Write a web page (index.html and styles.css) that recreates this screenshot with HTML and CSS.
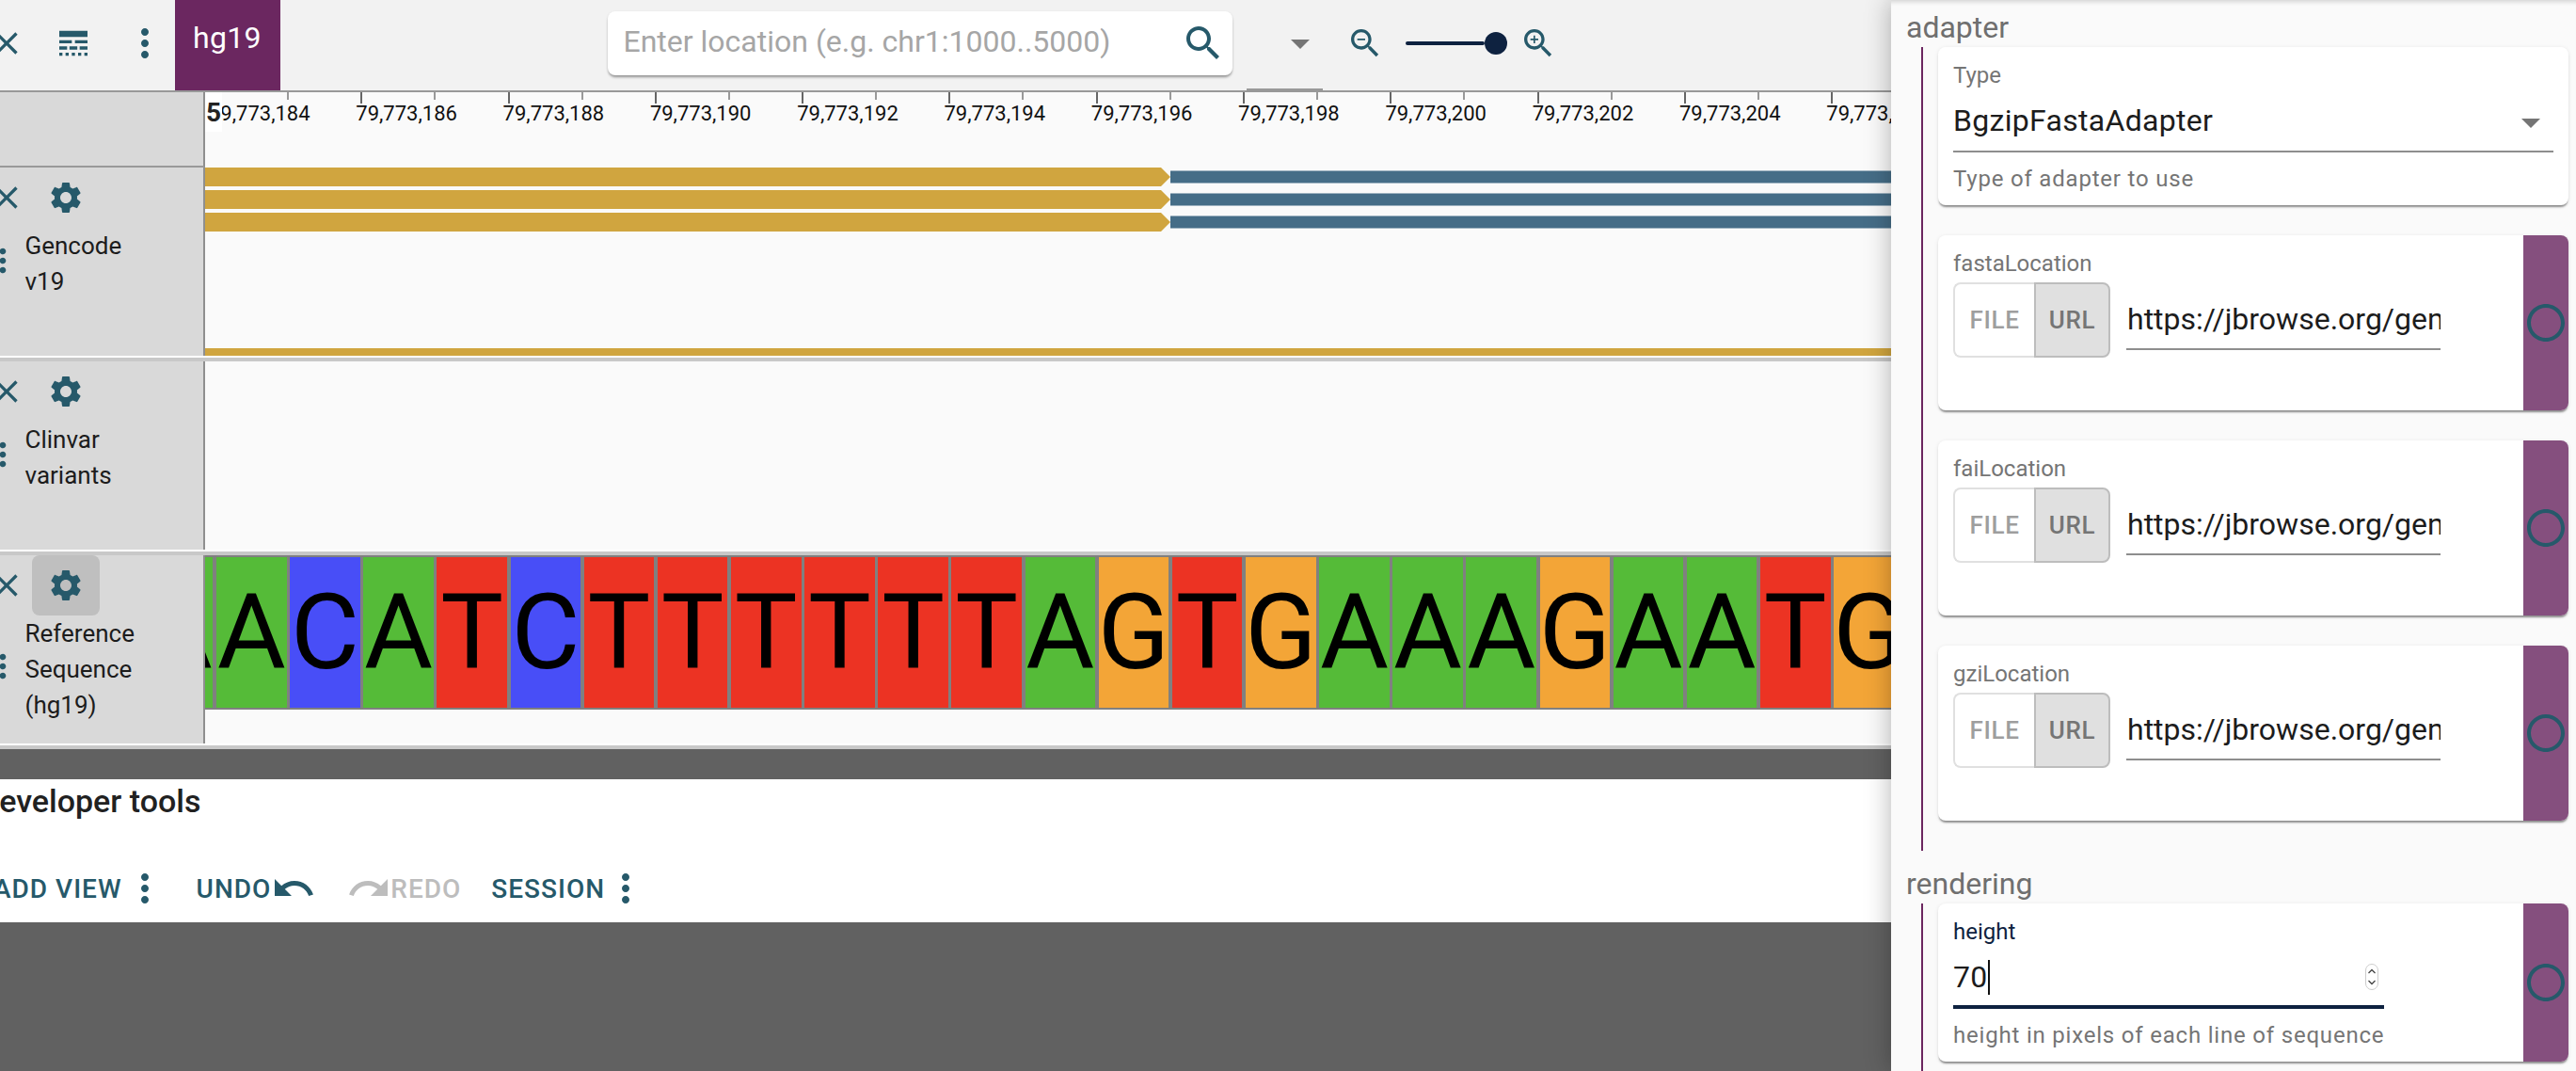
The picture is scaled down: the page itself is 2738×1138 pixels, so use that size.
FILE: index.html
```html
<!DOCTYPE html>
<html lang="en">
<head>
    <meta charset="UTF-8">
    <title>JBrowse - hg19</title>
    <link rel="stylesheet" href="styles.css">
</head>
<body>

<svg class="sprite" xmlns="http://www.w3.org/2000/svg">
    <symbol id="i-close" viewBox="0 0 24 24"><path d="M19 6.41L17.59 5 12 10.59 6.41 5 5 6.41 10.59 12 5 17.59 6.41 19 12 13.41 17.59 19 19 17.59 13.41 12z"/></symbol>
    <symbol id="i-linestyle" viewBox="0 0 24 24"><path d="M3 16h5v-2H3v2zm6.5 0h5v-2h-5v2zm6.5 0h5v-2h-5v2zM3 20h2v-2H3v2zm4 0h2v-2H7v2zm4 0h2v-2h-2v2zm4 0h2v-2h-2v2zm4 0h2v-2h-2v2zM3 12h8v-2H3v2zm10 0h8v-2h-8v2zM3 4v4h18V4H3z"/></symbol>
    <symbol id="i-more" viewBox="0 0 24 24"><path d="M12 8c1.1 0 2-.9 2-2s-.9-2-2-2-2 .9-2 2 .9 2 2 2zm0 2c-1.1 0-2 .9-2 2s.9 2 2 2 2-.9 2-2-.9-2-2-2zm0 6c-1.1 0-2 .9-2 2s.9 2 2 2 2-.9 2-2-.9-2-2-2z"/></symbol>
    <symbol id="i-search" viewBox="0 0 24 24"><path d="M15.5 14h-.79l-.28-.27C15.41 12.59 16 11.11 16 9.5 16 5.91 13.09 3 9.5 3S3 5.91 3 9.5 5.91 16 9.5 16c1.61 0 3.09-.59 4.23-1.57l.27.28v.79l5 4.99L20.49 19l-4.99-5zm-6 0C7.01 14 5 11.99 5 9.5S7.01 5 9.5 5 14 7.01 14 9.5 11.99 14 9.5 14z"/></symbol>
    <symbol id="i-zoomout" viewBox="0 0 24 24"><path d="M15.5 14h-.79l-.28-.27C15.41 12.59 16 11.11 16 9.5 16 5.91 13.09 3 9.5 3S3 5.91 3 9.5 5.91 16 9.5 16c1.61 0 3.09-.59 4.23-1.57l.27.28v.79l5 4.99L20.49 19l-4.99-5zm-6 0C7.01 14 5 11.99 5 9.5S7.01 5 9.5 5 14 7.01 14 9.5 11.99 14 9.5 14zM7 9h5v1H7z"/></symbol>
    <symbol id="i-zoomin" viewBox="0 0 24 24"><path d="M15.5 14h-.79l-.28-.27C15.41 12.59 16 11.11 16 9.5 16 5.91 13.09 3 9.5 3S3 5.91 3 9.5 5.91 16 9.5 16c1.61 0 3.09-.59 4.23-1.57l.27.28v.79l5 4.99L20.49 19l-4.99-5zm-6 0C7.01 14 5 11.99 5 9.5S7.01 5 9.5 5 14 7.01 14 9.5 11.99 14 9.5 14zM12 10h-2v2H9v-2H7V9h2V7h1v2h2v1z"/></symbol>
    <symbol id="i-drop" viewBox="0 0 24 24"><path d="M7 10l5 5 5-5z"/></symbol>
    <symbol id="i-gear" viewBox="0 0 24 24"><path d="M19.14 12.94c.04-.3.06-.61.06-.94 0-.32-.02-.64-.07-.94l2.03-1.58c.18-.14.23-.41.12-.61l-1.92-3.32c-.12-.22-.37-.29-.59-.22l-2.39.96c-.5-.38-1.03-.7-1.62-.94l-.36-2.54c-.04-.24-.24-.41-.48-.41h-3.84c-.24 0-.43.17-.47.41l-.36 2.54c-.59.24-1.13.57-1.62.94l-2.39-.96c-.22-.08-.47 0-.59.22L2.74 8.87c-.12.21-.08.47.12.61l2.03 1.58c-.05.3-.09.63-.09.94s.02.64.07.94l-2.03 1.58c-.18.14-.23.41-.12.61l1.92 3.32c.12.22.37.29.59.22l2.39-.96c.5.38 1.03.7 1.62.94l.36 2.54c.05.24.24.41.48.41h3.84c.24 0 .44-.17.47-.41l.36-2.54c.59-.24 1.13-.56 1.62-.94l2.39.96c.22.08.47 0 .59-.22l1.92-3.32c.12-.22.07-.47-.12-.61l-2.01-1.58zM12 15.6c-1.98 0-3.6-1.62-3.6-3.6s1.62-3.6 3.6-3.6 3.6 1.62 3.6 3.6-1.62 3.6-3.6 3.6z"/></symbol>
    <symbol id="i-undo" viewBox="0 0 24 24"><path d="M12.5 8c-2.65 0-5.05.99-6.9 2.6L2 7v9h9l-3.62-3.62c1.39-1.16 3.16-1.88 5.12-1.88 3.54 0 6.55 2.31 7.6 5.5l2.37-.78C21.08 11.03 17.15 8 12.5 8z"/></symbol>
    <symbol id="i-redo" viewBox="0 0 24 24"><path d="M18.4 10.6C16.55 8.99 14.15 8 11.5 8c-4.65 0-8.58 3.03-9.96 7.22L3.9 16c1.05-3.19 4.05-5.5 7.6-5.5 1.95 0 3.73.72 5.12 1.88L13 16h9V7l-3.6 3.6z"/></symbol>
    <symbol id="i-radio" viewBox="0 0 24 24"><path d="M12 2C6.48 2 2 6.48 2 12s4.48 10 10 10 10-4.48 10-10S17.52 2 12 2zm0 18c-4.42 0-8-3.58-8-8s3.58-8 8-8 8 3.58 8 8-3.58 8-8 8z"/></symbol>
</svg>

<div class="main">
    <div class="topbar">
        <svg class="icon icon-40 first-close"><use href="#i-close"/></svg>
        <svg class="icon icon-40 style-icon"><use href="#i-linestyle"/></svg>
        <svg class="icon icon-48 menu-icon"><use href="#i-more"/></svg>
        <div class="assembly-tab">hg19</div>
        <div class="search">
            <span class="search-text">Enter location (e.g. chr1:1000..5000)</span>
            <svg class="icon icon-48"><use href="#i-search"/></svg>
        </div>
        <div class="nav-select"><svg class="icon icon-48 grey"><use href="#i-drop"/></svg></div>
        <svg class="icon icon-40 zoom-out"><use href="#i-zoomout"/></svg>
        <div class="slider"><div class="slider-track"></div><div class="slider-thumb"></div></div>
        <svg class="icon icon-40 zoom-in"><use href="#i-zoomin"/></svg>
    </div>

    <div class="ruler-row">
        <div class="label-head"></div>
        <div class="ruler">
            <div class="ruler-cell">79,773,184</div>
            <div class="ruler-cell">79,773,186</div>
            <div class="ruler-cell">79,773,188</div>
            <div class="ruler-cell">79,773,190</div>
            <div class="ruler-cell">79,773,192</div>
            <div class="ruler-cell">79,773,194</div>
            <div class="ruler-cell">79,773,196</div>
            <div class="ruler-cell">79,773,198</div>
            <div class="ruler-cell">79,773,200</div>
            <div class="ruler-cell">79,773,202</div>
            <div class="ruler-cell">79,773,204</div>
            <div class="ruler-cell">79,773,206</div>
            <div class="chrom-badge">5</div>
        </div>
    </div>

    <div class="track">
        <div class="track-label">
            <div class="track-buttons">
                <svg class="icon icon-40"><use href="#i-close"/></svg>
                <div class="gear-btn"><svg class="icon icon-40"><use href="#i-gear"/></svg></div>
            </div>
            <div class="track-title-row">
                <svg class="icon icon-40 track-menu"><use href="#i-more"/></svg>
                <div class="track-title">Gencode<br>v19</div>
            </div>
        </div>
        <div class="track-canvas genes">
            <div class="gene-row"><div class="cds"></div><div class="utr"></div></div>
            <div class="gene-row"><div class="cds"></div><div class="utr"></div></div>
            <div class="gene-row"><div class="cds"></div><div class="utr"></div></div>
            <div class="gene-bottom"></div>
        </div>
    </div>

    <div class="track">
        <div class="track-label">
            <div class="track-buttons">
                <svg class="icon icon-40"><use href="#i-close"/></svg>
                <div class="gear-btn"><svg class="icon icon-40"><use href="#i-gear"/></svg></div>
            </div>
            <div class="track-title-row">
                <svg class="icon icon-40 track-menu"><use href="#i-more"/></svg>
                <div class="track-title">Clinvar<br>variants</div>
            </div>
        </div>
        <div class="track-canvas"></div>
    </div>

    <div class="track">
        <div class="track-label">
            <div class="track-buttons">
                <svg class="icon icon-40"><use href="#i-close"/></svg>
                <div class="gear-btn hovered"><svg class="icon icon-40"><use href="#i-gear"/></svg></div>
            </div>
            <div class="track-title-row">
                <svg class="icon icon-40 track-menu"><use href="#i-more"/></svg>
                <div class="track-title">Reference<br>Sequence<br>(hg19)</div>
            </div>
        </div>
        <div class="track-canvas">
            <div class="sequence">
                <div class="base a">A</div><div class="base a">A</div><div class="base c">C</div><div class="base a">A</div>
                <div class="base t">T</div><div class="base c">C</div><div class="base t">T</div><div class="base t">T</div>
                <div class="base t">T</div><div class="base t">T</div><div class="base t">T</div><div class="base t">T</div>
                <div class="base a">A</div><div class="base g">G</div><div class="base t">T</div><div class="base g">G</div>
                <div class="base a">A</div><div class="base a">A</div><div class="base a">A</div><div class="base g">G</div>
                <div class="base a">A</div><div class="base a">A</div><div class="base t">T</div><div class="base g">G</div>
                <div class="base a">A</div>
            </div>
        </div>
    </div>

    <div class="devtools">
        <div class="devtools-title">Developer tools</div>
        <div class="devtools-bar">
            <span class="dev-btn add-view">ADD VIEW</span>
            <svg class="icon icon-48"><use href="#i-more"/></svg>
            <span class="dev-btn undo">UNDO</span>
            <svg class="icon icon-48 undo-icon"><use href="#i-undo"/></svg>
            <svg class="icon icon-48 redo-icon"><use href="#i-redo"/></svg>
            <span class="dev-btn redo">REDO</span>
            <span class="dev-btn session">SESSION</span>
            <svg class="icon icon-48 session-menu"><use href="#i-more"/></svg>
        </div>
    </div>
</div>

<div class="drawer">
    <div class="section-title first">adapter</div>
    <div class="section-body">
        <div class="card card-short">
            <div class="card-body">
                <div class="field-label">Type</div>
                <div class="select-box">
                    <span class="value">BgzipFastaAdapter</span>
                    <svg class="icon icon-48 grey"><use href="#i-drop"/></svg>
                </div>
                <div class="helper">Type of adapter to use</div>
            </div>
        </div>

        <div class="card card-slot">
            <div class="card-body">
                <div class="field-label">fastaLocation</div>
                <div class="location-row">
                    <div class="toggle"><span class="toggle-file">FILE</span><span class="toggle-url">URL</span></div>
                    <div class="url-input"><span class="value">https://jbrowse.org/genomes/hg19/fasta/hg19.fa.gz</span></div>
                </div>
            </div>
            <div class="slot-side"><svg class="icon icon-48"><use href="#i-radio"/></svg></div>
        </div>

        <div class="card card-slot">
            <div class="card-body">
                <div class="field-label">faiLocation</div>
                <div class="location-row">
                    <div class="toggle"><span class="toggle-file">FILE</span><span class="toggle-url">URL</span></div>
                    <div class="url-input"><span class="value">https://jbrowse.org/genomes/hg19/fasta/hg19.fa.gz.fai</span></div>
                </div>
            </div>
            <div class="slot-side"><svg class="icon icon-48"><use href="#i-radio"/></svg></div>
        </div>

        <div class="card card-slot">
            <div class="card-body">
                <div class="field-label">gziLocation</div>
                <div class="location-row">
                    <div class="toggle"><span class="toggle-file">FILE</span><span class="toggle-url">URL</span></div>
                    <div class="url-input"><span class="value">https://jbrowse.org/genomes/hg19/fasta/hg19.fa.gz.gzi</span></div>
                </div>
            </div>
            <div class="slot-side"><svg class="icon icon-48"><use href="#i-radio"/></svg></div>
        </div>
    </div>

    <div class="section-title">rendering</div>
    <div class="section-body">
        <div class="card card-short">
            <div class="card-body">
                <div class="field-label focused">height</div>
                <div class="number-box">
                    <span class="value">70</span><span class="caret"></span>
                    <svg class="spinner" viewBox="0 0 14 28">
                        <rect x="0.5" y="0.5" width="13" height="27" rx="6.5" fill="#fff" stroke="#ccc"/>
                        <path d="M3.5 10l3.5-3.5 3.5 3.5M3.5 18l3.5 3.5 3.5-3.5" fill="none" stroke="#444" stroke-width="1.3"/>
                    </svg>
                </div>
                <div class="helper">height in pixels of each line of sequence</div>
            </div>
            <div class="slot-side"><svg class="icon icon-48"><use href="#i-radio"/></svg></div>
        </div>
    </div>
</div>

</body>
</html>
```

FILE: styles.css
```css
* {
    box-sizing: border-box;
}
html, body {
    margin: 0;
    height: 100%;
}
body {
    display: flex;
    height: 1138px;
    overflow: hidden;
    font-family: Roboto, "Liberation Sans", sans-serif;
    background-color: #616161;
}
.sprite {
    position: absolute;
    width: 0;
    height: 0;
}
.icon {
    display: block;
    flex: none;
    fill: currentColor;
    color: #26596a;
}
.icon-40 {
    width: 40px;
    height: 40px;
}
.icon-48 {
    width: 48px;
    height: 48px;
}
.icon.grey {
    color: #757575;
}

/* left side, the linear genome view */
.main {
    flex: none;
    width: 2010px;
    height: 1138px;
    overflow: hidden;
}
.topbar {
    display: flex;
    align-items: center;
    height: 96px;
    padding-bottom: 4px;
    background-color: #f2f2f2;
}
.first-close {
    margin-left: -13.5px;
}
.style-icon {
    margin-left: 31px;
}
.menu-icon {
    margin-left: 32px;
}
.assembly-tab {
    align-self: flex-start;
    width: 112px;
    height: 96px;
    margin-left: 8px;
    margin-bottom: -4px;
    padding-top: 20px;
    text-align: center;
    font-size: 32px;
    line-height: 40px;
    letter-spacing: 0.3px;
    color: #fff;
    background-color: #6b2760;
}
.search {
    display: flex;
    align-items: center;
    justify-content: space-between;
    width: 664px;
    height: 68px;
    margin-left: 348px;
    padding: 0 7px 0 17px;
    border-radius: 8px;
    background-color: #fff;
    box-shadow: 0 3px 3px -1px rgba(0, 0, 0, 0.35), 0 1px 3px rgba(0, 0, 0, 0.12);
}
.search-text {
    margin-bottom: 5px;
    font-size: 32px;
    color: #a6a6a6;
}
.nav-select {
    align-self: flex-start;
    width: 81px;
    height: 96px;
    margin-left: 15px;
    margin-bottom: -4px;
    padding: 22px 0 0 33px;
    border-bottom: 2px solid #999;
}
.zoom-out {
    margin-left: 25px;
}
.slider {
    display: flex;
    align-items: center;
    margin-left: 23px;
}
.slider-track {
    width: 84px;
    height: 4px;
    border-radius: 2px;
    background-color: #0e2240;
}
.slider-thumb {
    width: 24px;
    height: 24px;
    border-radius: 50%;
    background-color: #0e2240;
}
.zoom-in {
    margin-left: 13px;
}

.ruler-row {
    display: flex;
    height: 82px;
    border-top: 2px solid #999;
}
.label-head {
    flex: none;
    width: 218px;
    background-color: #d9d9d9;
    border-right: 2px solid #8f8f8f;
    border-bottom: 2px solid #999;
}
.ruler {
    position: relative;
    display: flex;
    flex: 1;
    padding-left: 10px;
    overflow: hidden;
    background-color: #fafafa;
}
.ruler-cell {
    position: relative;
    flex: none;
    width: 156.3px;
    padding: 10px 0 0 0;
    text-indent: -6px;
    font-size: 22px;
    line-height: 26px;
    white-space: nowrap;
    color: #111;
}
.ruler-cell::before, .ruler-cell::after {
    content: "";
    position: absolute;
    top: 0;
    width: 2px;
}
.ruler-cell::before {
    left: -1px;
    height: 12px;
    background-color: #666;
}
.ruler-cell::after {
    left: 77px;
    height: 8px;
    background-color: #999;
}
.chrom-badge {
    position: absolute;
    left: 0;
    top: -2px;
    width: 18px;
    height: 44px;
    padding-top: 6px;
    text-align: center;
    font-size: 28px;
    line-height: 36px;
    font-weight: 700;
    color: #222;
    background-color: #fff;
}

.track {
    display: flex;
    height: 206px;
    padding-bottom: 2px;
    border-bottom: 4px solid #c8c8c8;
    background-color: #fff;
}
.track-label {
    flex: none;
    width: 218px;
    overflow: hidden;
    background-color: #d9d9d9;
    border-right: 2px solid #8f8f8f;
}
.track-buttons {
    display: flex;
    align-items: center;
    height: 64px;
    margin-left: -13.5px;
}
.gear-btn {
    display: flex;
    align-items: center;
    justify-content: center;
    width: 72px;
    height: 64px;
    margin-left: 7.5px;
    border-radius: 8px;
}
.gear-btn.hovered {
    background-color: #bfbfbf;
}
.track-title-row {
    display: flex;
    align-items: center;
    margin-left: -17px;
}
.track-menu {
    margin-bottom: 7px;
}
.track-title {
    margin-left: 3.5px;
    font-size: 26px;
    line-height: 38px;
    color: #1c1c1c;
}
.track-canvas {
    position: relative;
    flex: 1;
    overflow: hidden;
    background-color: #fafafa;
}

.genes {
    display: flex;
    flex-direction: column;
    gap: 4px;
}
.gene-row {
    display: flex;
    align-items: center;
    height: 20px;
}
.cds {
    flex: none;
    width: 1026px;
    height: 20px;
    background-color: #d0a53f;
    clip-path: polygon(0 0, 1016px 0, 100% 50%, 1016px 100%, 0 100%);
}
.utr {
    flex: 1;
    height: 14px;
    background-color: #456d87;
    border-top: 1px solid #9db2c0;
    border-bottom: 1px solid #9db2c0;
}
.gene-bottom {
    margin-top: auto;
    height: 8px;
    background-color: #d0a53f;
}

.sequence {
    display: flex;
    height: 164px;
    margin-left: -66.15px;
    padding: 2px 0;
    background-color: #808080;
}
.base {
    flex: none;
    display: flex;
    align-items: center;
    justify-content: center;
    width: 74.6px;
    height: 160px;
    margin-right: 3.55px;
    overflow: hidden;
    font-size: 112px;
    line-height: 1;
    color: #000;
}
.base.a { background-color: #55bb38; }
.base.c { background-color: #484ef7; }
.base.t { background-color: #ec3323; }
.base.g { background-color: #f3a537; }

.devtools {
    height: 152px;
    margin-top: 32px;
    background-color: #fff;
}
.devtools-title {
    margin-left: -23px;
    padding-top: 2px;
    font-size: 34px;
    line-height: 42px;
    font-weight: 500;
    color: #212121;
}
.devtools-bar {
    display: flex;
    align-items: center;
    height: 48px;
    margin-top: 48px;
}
.dev-btn {
    flex: none;
    font-size: 28px;
    font-weight: 500;
    letter-spacing: 1px;
    color: #26596a;
}
.add-view {
    margin-left: -7px;
}
.undo {
    margin-left: 31px;
}
.undo-icon {
    margin-left: 0;
}
.redo-icon {
    margin-left: 32px;
    color: #bdbdbd;
}
.redo {
    margin-left: -1px;
    color: #bdbdbd;
}
.session {
    margin-left: 32px;
}
.session-menu {
    margin-left: -2px;
}

/* configuration drawer, over the right side of the view */
.drawer {
    position: relative;
    flex: none;
    width: 728px;
    height: 1138px;
    overflow: hidden;
    background-color: #fafafa;
    box-shadow: 0 0 26px rgba(0, 0, 0, 0.3), inset 0 6px 5px -4px rgba(0, 0, 0, 0.16);
}
.section-title {
    height: 56px;
    margin-left: 16px;
    padding-top: 13px;
    font-size: 32px;
    line-height: 44px;
    color: #6f6f6f;
}
.section-title.first {
    margin-top: -6px;
}
.section-body {
    display: flex;
    flex-direction: column;
    gap: 32px;
    margin-left: 32px;
    margin-right: 8px;
    padding-left: 16px;
    padding-bottom: 32px;
    border-left: 2px solid #6b2760;
}
.card {
    display: flex;
    flex: none;
    overflow: hidden;
    border-radius: 8px;
    background-color: #fff;
    box-shadow: 0 3px 2px -1px rgba(0, 0, 0, 0.4), 0 1px 4px rgba(0, 0, 0, 0.1);
}
.card-short {
    height: 168px;
}
.card-slot {
    height: 186px;
}
.card-body {
    flex: 1;
    min-width: 0;
    padding: 16px 16px 0;
}
.field-label {
    font-size: 24px;
    line-height: 28px;
    color: #757575;
}
.field-label.focused {
    color: #0e2240;
}
.value {
    font-size: 32px;
    line-height: 38px;
    letter-spacing: 0.3px;
    color: #1c1c1c;
}
.select-box {
    display: flex;
    justify-content: space-between;
    align-items: flex-start;
    height: 68px;
    padding-top: 15px;
    border-bottom: 2px solid #8e8e8e;
}
.select-box .icon {
    margin-top: -3px;
}
.helper {
    padding-top: 14px;
    font-size: 24px;
    line-height: 28px;
    letter-spacing: 0.8px;
    color: #757575;
}
.location-row {
    display: flex;
    align-items: flex-start;
    margin-top: 6px;
}
.toggle {
    display: flex;
    flex: none;
    width: 167px;
    height: 80px;
    font-size: 26px;
    font-weight: 500;
    line-height: 76px;
    letter-spacing: 0.7px;
    text-align: center;
}
.toggle-file {
    width: 86px;
    color: #9e9e9e;
    border: 2px solid #e0e0e0;
    border-right: 0;
    border-radius: 8px 0 0 8px;
}
.toggle-url {
    width: 81px;
    color: #757575;
    background-color: #e0e0e0;
    border: 2px solid #bdbdbd;
    border-radius: 0 8px 8px 0;
}
.url-input {
    width: 334px;
    height: 72px;
    margin-left: 17px;
    padding: 20px 0 0 1px;
    overflow: hidden;
    white-space: nowrap;
    border-bottom: 2px solid #8e8e8e;
}
.url-input .value {
    letter-spacing: 0;
}
.slot-side {
    display: flex;
    flex: none;
    align-items: center;
    justify-content: center;
    width: 48px;
    background-color: #854f7e;
}
.number-box {
    display: flex;
    align-items: flex-start;
    width: 458px;
    height: 68px;
    padding-top: 15px;
    border-bottom: 4px solid #0e2240;
}
.caret {
    width: 2px;
    height: 37px;
    margin-top: 1px;
    background-color: #111;
}
.spinner {
    width: 14px;
    height: 28px;
    margin-left: auto;
    margin-right: 6px;
    margin-top: 5px;
}
```
